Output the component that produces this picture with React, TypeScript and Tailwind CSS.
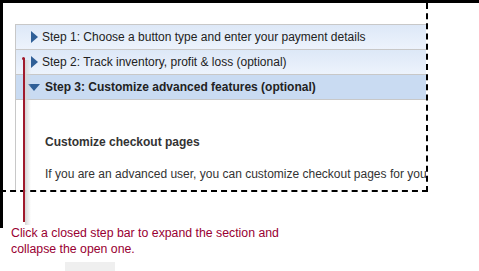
const steps = [
  { label: 'Step 1: Choose a button type and enter your payment details', open: false },
  { label: 'Step 2: Track inventory, profit & loss (optional)', open: false },
  { label: 'Step 3: Customize advanced features (optional)', open: true },
]

function Arrow({ open }: { open: boolean }) {
  if (open) {
    return (
      <svg width="12" height="7" viewBox="0 0 12 7" className="ml-[12px] mr-[4px] shrink-0">
        <path d="M0 0 L12 0 L6 7 Z" fill="#2f5f97" />
      </svg>
    )
  }
  return (
    <svg width="7" height="12" viewBox="0 0 7 12" className="ml-[15px] mr-[4px] shrink-0">
      <path d="M0 0 L7 6 L0 12 Z" fill="#2f5f97" />
    </svg>
  )
}

export default function App() {
  return (
    <div
      className="relative w-[479px] h-[271px] overflow-hidden bg-white text-[#222]"
      style={{ fontFamily: '"Liberation Sans", Arial, sans-serif' }}
    >
      {/* screenshot frame */}
      <div className="h-[228px] border-t-[3px] border-l-[3px] border-black">
        <div className="w-[428px] h-[189px] -ml-[3px] pl-[3px] border-r-2 border-b-2 border-dashed border-black overflow-hidden">
          <div className="pt-[21px] pl-[12px]">
            <div className="w-[440px] border-l border-t border-[#c8c8c8]">
              {steps.map((s) => (
                <div
                  key={s.label}
                  className={`flex items-center h-[25px] border-b border-[#c8c8c8] text-[12px] whitespace-nowrap ${
                    s.open
                      ? 'font-bold bg-[#c9dbf2]'
                      : 'bg-gradient-to-b from-[#dde8f7] to-[#edf3fc]'
                  }`}
                >
                  <Arrow open={s.open} />
                  <span className={s.open ? 'ml-[1px]' : ''}>{s.label}</span>
                </div>
              ))}
              <div className="pl-[29px] pt-[33px] h-[100px] text-[12px] text-[#333] whitespace-nowrap">
                <div className="font-bold">Customize checkout pages</div>
                <div className="mt-[14px]">
                  If you are an advanced user, you can customize checkout pages for your customers
                </div>
              </div>
            </div>
          </div>
        </div>
      </div>

      {/* callout line */}
      <div className="absolute left-[25px] top-[60px] w-[6px] h-[165px] bg-gradient-to-r from-[#d6d6d6] to-transparent" />
      <div className="absolute left-[22px] top-[57px] w-[3px] h-[3px] rounded-full bg-[#a01a2c]" />
      <div className="absolute left-[23px] top-[58px] w-[2px] h-[164px] bg-[#a01a2c]" />

      <p className="-mt-[3px] pl-[11px] text-[12.3px] leading-[16px] text-[#990033]">
        Click a closed step bar to expand the section and
        <br />
        collapse the open one.
      </p>
      <div className="ml-[65px] mt-[5px] w-[50px] h-[10px] bg-[#efefef]" />
    </div>
  )
}
